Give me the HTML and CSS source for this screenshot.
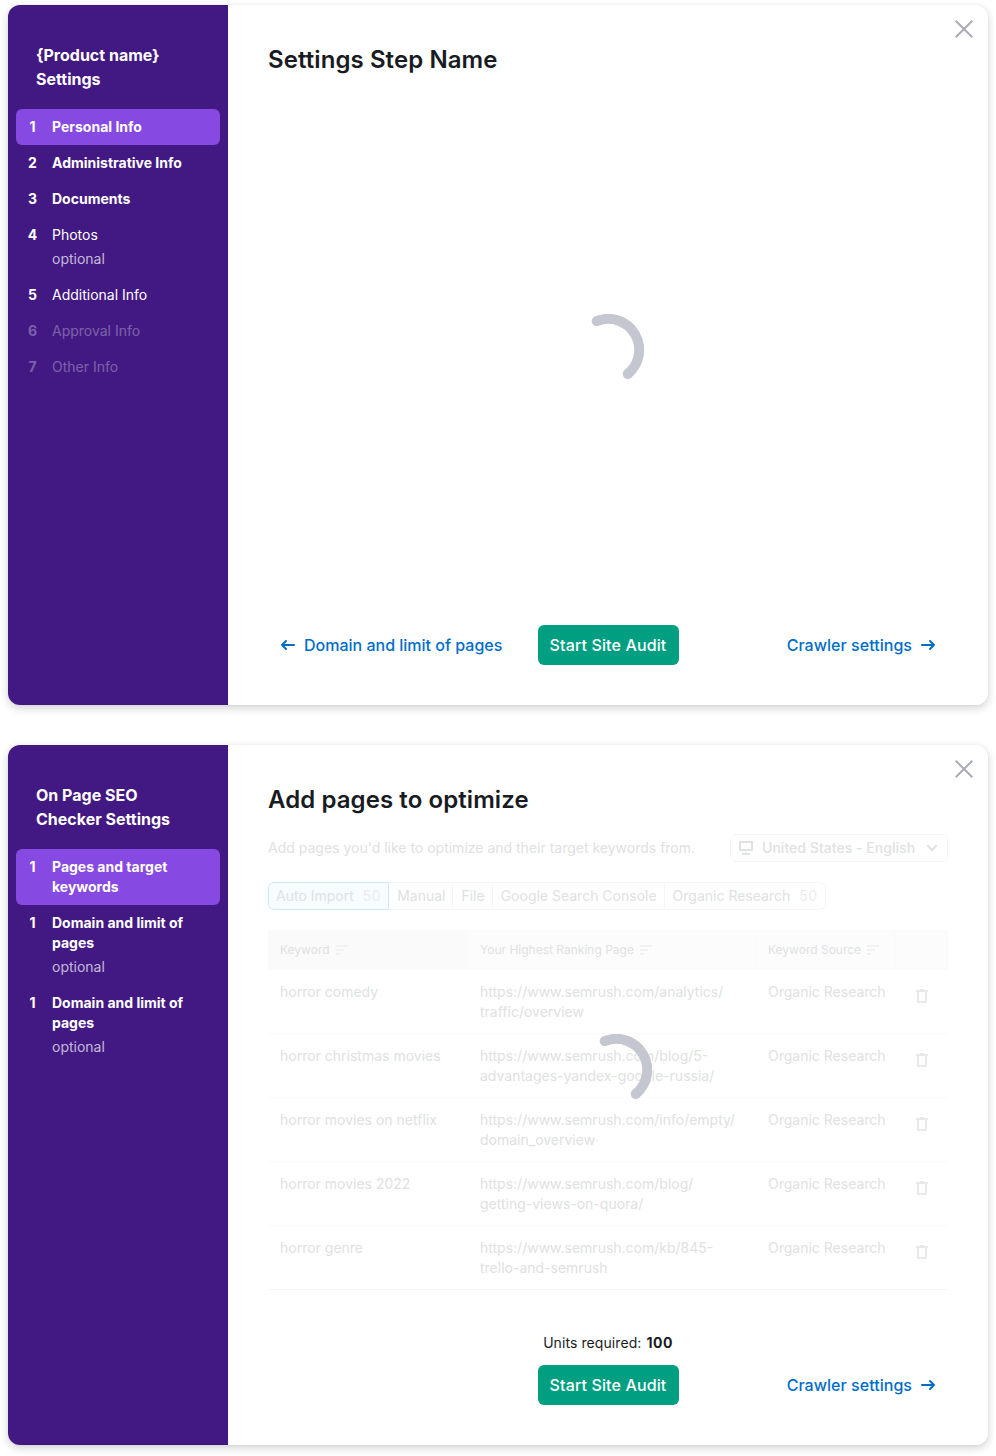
FILE: index.html
```html
<!DOCTYPE html>
<html lang="en">
<head>
<meta charset="utf-8">
<title>Settings wizard</title>
<link rel="stylesheet" href="styles.css">
</head>
<body>
<svg width="0" height="0" class="defs">
  <symbol id="close" viewBox="0 0 20 20"><path d="M1.7 1.7 18.3 18.3M18.3 1.7 1.7 18.3" fill="none" stroke="currentColor" stroke-width="2"/></symbol>
  <symbol id="spin" viewBox="0 0 72 72"><path d="M24.7 7.1A31 31 0 0 1 55.7 60" fill="none" stroke="currentColor" stroke-width="10" stroke-linecap="round"/></symbol>
  <symbol id="right" viewBox="0 0 16 16"><path d="M2 8H14M10 4 14 8 10 12" fill="none" stroke="currentColor" stroke-width="2" stroke-linecap="round" stroke-linejoin="round"/></symbol>
  <symbol id="left" viewBox="0 0 16 16"><path d="M14 8H2M6 4 2 8 6 12" fill="none" stroke="currentColor" stroke-width="2" stroke-linecap="round" stroke-linejoin="round"/></symbol>
  <symbol id="desktop" viewBox="0 0 16 16"><path d="M2 2H14V10H2ZM8 12.5V14M4 14H12" fill="none" stroke="currentColor" stroke-width="2"/></symbol>
  <symbol id="chevron" viewBox="0 0 16 16"><path d="M4 6 8 10 12 6" fill="none" stroke="currentColor" stroke-width="2" stroke-linecap="round" stroke-linejoin="round"/></symbol>
  <symbol id="sort" viewBox="0 0 12 10"><path d="M0 1H12M0 5H8M0 9H4" fill="none" stroke="currentColor" stroke-width="2"/></symbol>
  <symbol id="trash" viewBox="0 0 16 16"><path d="M2 3H14M6 2H10M4 3V14H12V3" fill="none" stroke="currentColor" stroke-width="2"/></symbol>
</svg>

<section class="wizard">
  <aside class="sidebar">
    <h2 class="sidebar-title">{Product name} Settings</h2>
    <ol class="steps">
      <li class="step active"><b class="num">1</b><div class="name">Personal Info</div></li>
      <li class="step done"><b class="num">2</b><div class="name">Administrative Info</div></li>
      <li class="step done"><b class="num">3</b><div class="name">Documents</div></li>
      <li class="step"><b class="num">4</b><div class="name">Photos<span class="optional">optional</span></div></li>
      <li class="step"><b class="num">5</b><div class="name">Additional Info</div></li>
      <li class="step disabled"><b class="num">6</b><div class="name">Approval Info</div></li>
      <li class="step disabled"><b class="num">7</b><div class="name">Other Info</div></li>
    </ol>
  </aside>
  <main class="content">
    <svg class="close"><use href="#close"/></svg>
    <h1 class="heading">Settings Step Name</h1>
    <div class="loading"><svg class="spinner"><use href="#spin"/></svg></div>
    <footer class="footer">
      <a class="link prev"><svg class="icon"><use href="#left"/></svg>Domain and limit of pages</a>
      <button class="primary">Start Site Audit</button>
      <a class="link next">Crawler settings<svg class="icon"><use href="#right"/></svg></a>
    </footer>
  </main>
</section>

<section class="wizard">
  <aside class="sidebar">
    <h2 class="sidebar-title">On Page SEO Checker Settings</h2>
    <ol class="steps">
      <li class="step active"><b class="num">1</b><div class="name">Pages and target keywords</div></li>
      <li class="step done"><b class="num">1</b><div class="name">Domain and limit of pages<span class="optional">optional</span></div></li>
      <li class="step done"><b class="num">1</b><div class="name">Domain and limit of pages<span class="optional">optional</span></div></li>
    </ol>
  </aside>
  <main class="content">
    <svg class="close"><use href="#close"/></svg>
    <h1 class="heading">Add pages to optimize</h1>
    <div class="form">
      <div class="intro">
        <p class="intro-text">Add pages you'd like to optimize and their target keywords from.</p>
        <div class="select"><svg class="icon"><use href="#desktop"/></svg><span class="select-text">United States - English</span><svg class="icon"><use href="#chevron"/></svg></div>
      </div>
      <div class="pills">
        <span class="pill selected">Auto Import<span class="count">50</span></span>
        <span class="pill">Manual</span>
        <span class="pill">File</span>
        <span class="pill">Google Search Console</span>
        <span class="pill">Organic Research<span class="count">50</span></span>
      </div>
      <div class="table">
        <div class="row head">
          <div class="cell sorted">Keyword<svg class="sort"><use href="#sort"/></svg></div>
          <div class="cell">Your Highest Ranking Page<svg class="sort"><use href="#sort"/></svg></div>
          <div class="cell">Keyword Source<svg class="sort"><use href="#sort"/></svg></div>
          <div class="cell"></div>
        </div>
        <div class="row"><div class="cell">horror comedy</div><div class="cell">https://www.semrush.com/analytics/<br>traffic/overview</div><div class="cell">Organic Research</div><div class="cell action"><svg class="icon"><use href="#trash"/></svg></div></div>
        <div class="row"><div class="cell">horror christmas movies</div><div class="cell">https://www.semrush.com/blog/5-<br>advantages-yandex-google-russia/</div><div class="cell">Organic Research</div><div class="cell action"><svg class="icon"><use href="#trash"/></svg></div></div>
        <div class="row"><div class="cell">horror movies on netflix</div><div class="cell">https://www.semrush.com/info/empty/<br>domain_overview</div><div class="cell">Organic Research</div><div class="cell action"><svg class="icon"><use href="#trash"/></svg></div></div>
        <div class="row"><div class="cell">horror movies 2022</div><div class="cell">https://www.semrush.com/blog/<br>getting-views-on-quora/</div><div class="cell">Organic Research</div><div class="cell action"><svg class="icon"><use href="#trash"/></svg></div></div>
        <div class="row last"><div class="cell">horror genre</div><div class="cell">https://www.semrush.com/kb/845-<br>trello-and-semrush</div><div class="cell">Organic Research</div><div class="cell action"><svg class="icon"><use href="#trash"/></svg></div></div>
      </div>
      <svg class="spinner overlay"><use href="#spin"/></svg>
    </div>
    <p class="units">Units required: <b class="units-value">100</b></p>
    <footer class="footer">
      <button class="primary">Start Site Audit</button>
      <a class="link next">Crawler settings<svg class="icon"><use href="#right"/></svg></a>
    </footer>
  </main>
</section>
</body>
</html>
```
FILE: styles.css
```css
* { box-sizing: border-box; }
body {
  margin: 0;
  padding: 5px 8px 11px;
  display: flex;
  flex-direction: column;
  gap: 40px;
  background: #fff;
  color: #191b23;
  font: 14px/20px Inter, "Liberation Sans", sans-serif;
}
h1, h2, p, ol { margin: 0; padding: 0; }
svg { display: block; flex: none; }
.defs { position: absolute; }

.wizard {
  display: flex;
  height: 700px;
  border-radius: 12px;
  overflow: hidden;
  box-shadow: 0 3px 8px rgba(25, 27, 35, .2), 0 0 1px rgba(25, 27, 35, .16);
}
.sidebar {
  width: 220px;
  flex: none;
  padding: 38px 8px 40px;
  background: #421983;
  color: #fff;
}
.sidebar-title {
  padding: 0 28px 18px 20px;
  font-size: 16px;
  line-height: 24px;
  font-weight: 700;
}
.steps { list-style: none; }
.step { display: flex; padding: 8px 20px 8px 8px; border-radius: 6px; }
.active { background: #8649e1; }
.num { width: 17px; margin-right: 11px; text-align: center; font-weight: 700; }
.name { flex: 1; }
.active .name, .done .name { font-weight: 700; }
.optional { display: block; margin-top: 4px; font-weight: 400; color: rgba(255, 255, 255, .7); }
.disabled { opacity: .3; }

.content {
  position: relative;
  flex: 1;
  display: flex;
  flex-direction: column;
  padding: 40px;
  background: #fff;
}
.close { position: absolute; top: 14px; right: 14px; width: 20px; height: 20px; color: #a9abb6; }
.heading { font-size: 24px; line-height: 29px; font-weight: 600; letter-spacing: .08px; }
.loading { flex: 1; display: flex; align-items: center; justify-content: center; }
.spinner { width: 72px; height: 72px; color: #c4c7cf; }

.footer { display: grid; grid-template-columns: 1fr auto 1fr; align-items: center; height: 40px; }
.link { display: flex; align-items: center; gap: 8px; font-size: 16px; font-weight: 500; color: #006dca; }
.icon { width: 16px; height: 16px; }
.prev { padding-left: 12px; white-space: nowrap; }
.next { grid-column: 3; justify-self: end; padding-right: 12px; letter-spacing: .04px; }
.primary {
  grid-column: 2;
  width: 141px;
  height: 40px;
  padding: 0;
  border: 0;
  border-radius: 6px;
  background: #009f81;
  color: #fff;
  font: 500 16px/24px Inter, "Liberation Sans", sans-serif;
  letter-spacing: .13px;
}

.form { position: relative; padding-top: 20px; color: #e0e1e1; }
.intro { display: flex; align-items: center; justify-content: space-between; height: 28px; }
.select {
  display: flex;
  align-items: center;
  gap: 8px;
  width: 218px;
  height: 28px;
  padding: 0 7px;
  border: 1px solid #f5f5f6;
  border-radius: 6px;
  font-weight: 500;
}
.select-text { flex: 1; white-space: nowrap; letter-spacing: .04px; }
.pills { display: flex; margin-top: 20px; }
.pill {
  height: 28px;
  padding: 3px 7px 3px 8px;
  border: 1px solid #f5f5f6;
  border-left-width: 0;
  white-space: nowrap;
}
.pill:last-child { border-radius: 0 6px 6px 0; }
.selected { padding-left: 7px; border: 1px solid #d0e7fa; border-radius: 6px 0 0 6px; background: #f7fcff; }
.count { margin-left: 9px; letter-spacing: .5px; color: #ececee; }
.table { margin-top: 20px; }
.row {
  display: grid;
  grid-template-columns: 200px 288px 140px 52px;
  height: 64px;
  border-bottom: 1px solid #fafafa;
}
.cell { padding: 12px; white-space: nowrap; }
.action { padding: 18px; color: #e9e9ea; }
.head { height: 40px; border: 0; font-size: 12px; line-height: 16px; }
.head .cell { display: flex; align-items: center; gap: 6px; background: #fcfcfd; border-right: 1px solid #fafafb; }
.head .sorted { background: #fafafa; }
.sort { width: 12px; height: 10px; color: #f1f1f2; }
.last { border-bottom: 1px solid #f3f3f5; }
.overlay { position: absolute; left: 312px; top: 220px; }
.units { margin-top: auto; padding-bottom: 12px; text-align: center; letter-spacing: .08px; }
.units-value { margin-left: 1px; font-weight: 700; letter-spacing: .5px; }
```
